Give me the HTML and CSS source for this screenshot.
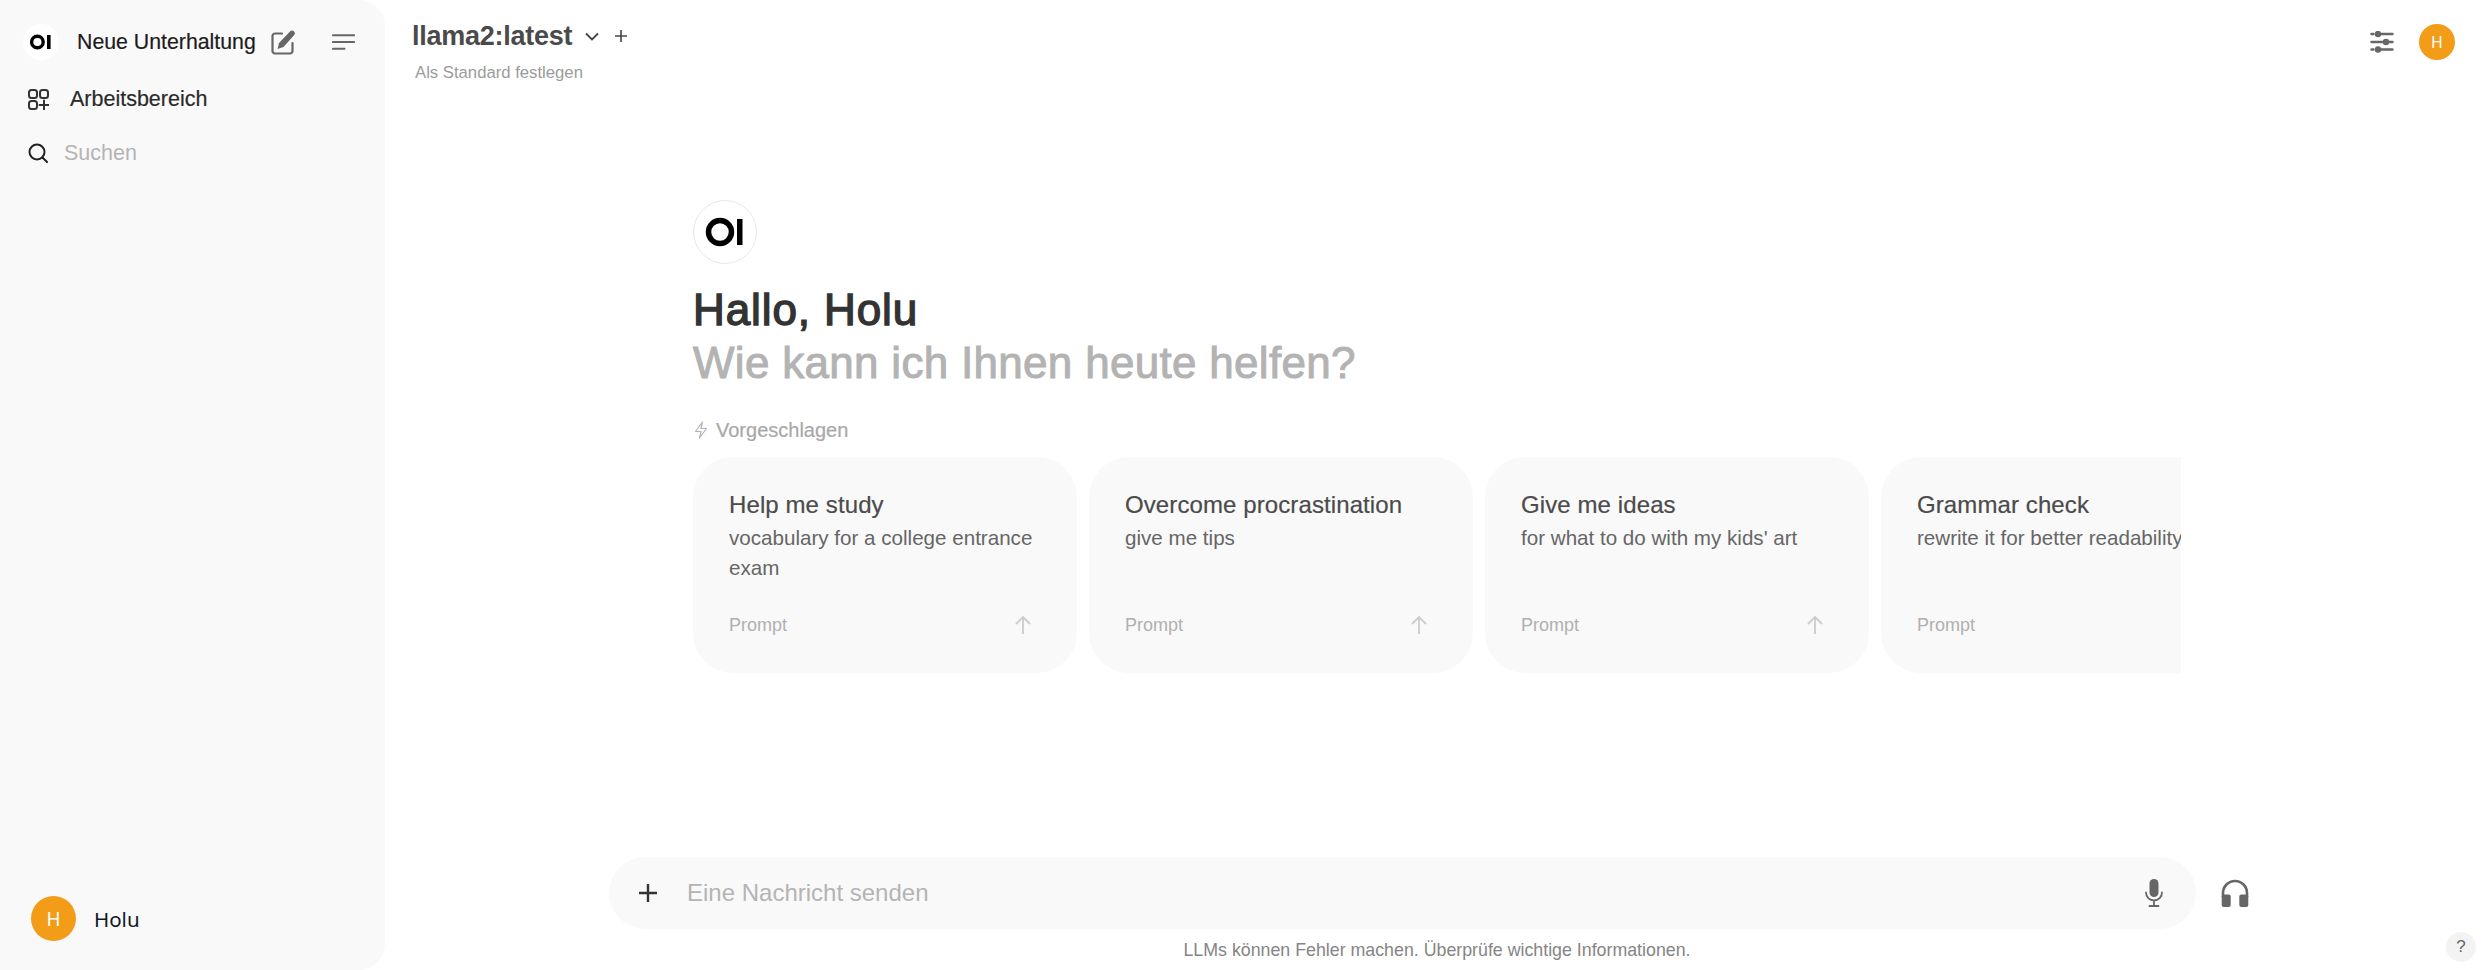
FILE: index.html
```html
<!DOCTYPE html>
<html lang="de">
<head>
<meta charset="utf-8">
<title>Open WebUI</title>
<link rel="stylesheet" href="styles.css">
</head>
<body>
<div class="app">
  <aside class="sidebar">
    <div class="side-top">
      <div class="new-chat">
        <span class="logo-small">
          <svg viewBox="0 0 24 24" width="24" height="24"><circle cx="8.400" cy="12" r="5.800" fill="none" stroke="#000" stroke-width="3.400"/><rect x="18" y="5" width="3.600" height="14" fill="#000"/></svg>
        </span>
        <span class="new-chat-label">Neue Unterhaltung</span>
        <svg class="edit-icon" viewBox="0 0 24 25" width="24" height="25"><path d="M11 3.500H4A2.500 2.500 0 0 0 1.500 6v15A2.500 2.500 0 0 0 4 23.500h15a2.500 2.500 0 0 0 2.500-2.500V13" fill="none" stroke="#666" stroke-width="2.200" stroke-linecap="round"/><path d="M19 1.500a2.700 2.700 0 0 1 4 3.700L12.500 17l-6 2 1.500-6z" fill="#666"/></svg>
        <svg class="menu-icon" viewBox="0 0 24 18" width="23" height="18"><path d="M1 2h22M1 9h22M1 16h12" fill="none" stroke="#666" stroke-width="2.200" stroke-linecap="round"/></svg>
      </div>
      <div class="side-link">
        <svg viewBox="0 0 21 21" width="21" height="21"><g fill="none" stroke="#333" stroke-width="2"><rect x="1" y="1" width="8" height="8" rx="2.500"/><rect x="12" y="1" width="8" height="8" rx="2.500"/><rect x="1" y="12" width="8" height="8" rx="2.500"/><path d="M16 11.500v9M11.500 16h9" stroke-linecap="round"/></g></svg>
        <span>Arbeitsbereich</span>
      </div>
      <div class="side-search">
        <svg viewBox="0 0 20 20" width="20" height="20"><circle cx="9" cy="9" r="7.500" fill="none" stroke="#222" stroke-width="2"/><path d="M14.500 14.500L19 19" stroke="#222" stroke-width="2" stroke-linecap="round"/></svg>
        <span>Suchen</span>
      </div>
    </div>
    <div class="side-user">
      <span class="avatar avatar-large">H</span>
      <span class="user-name">Holu</span>
    </div>
  </aside>

  <main class="main">
    <header class="topbar">
      <div class="model-block">
        <div class="model-row">
          <span class="model-name">llama2:latest</span>
          <svg class="chevron" viewBox="0 0 14 9" width="14" height="9"><path d="M1 1.500l6 6 6-6" fill="none" stroke="#444" stroke-width="1.800"/></svg>
          <svg class="plus-small" viewBox="0 0 14 14" width="14" height="14"><path d="M7 1v12M1 7h12" fill="none" stroke="#444" stroke-width="1.600"/></svg>
        </div>
        <div class="model-default">Als Standard festlegen</div>
      </div>
      <div class="top-actions">
        <svg viewBox="0 0 24 22" width="24" height="22"><g stroke="#666" stroke-width="2.400" stroke-linecap="round"><path d="M1.500 3h2M10 3h12.500M1.500 11h11M19 11h3.500M1.500 18.500h2M10 18.500h12.500"/></g><g fill="#666"><circle cx="8" cy="3" r="3.200"/><circle cx="16" cy="11" r="3.200"/><circle cx="8" cy="18.500" r="3.200"/></g></svg>
        <span class="avatar avatar-top">H</span>
      </div>
    </header>

    <section class="welcome">
      <div class="logo-large">
        <svg viewBox="0 0 40 30" width="40" height="30"><circle cx="15" cy="15" r="11.500" fill="none" stroke="#000" stroke-width="5.500"/><rect x="32" y="2" width="5.500" height="26" fill="#000"/></svg>
      </div>
      <h1 class="hello">Hallo, Holu</h1>
      <p class="help">Wie kann ich Ihnen heute helfen?</p>
      <div class="suggest-label">
        <svg viewBox="0 0 14 18" width="14" height="18"><path d="M8.500 1L1.500 10.500H7L5.500 17l7-9.500H7z" fill="none" stroke="#b4b4b4" stroke-width="1.200" stroke-linejoin="round"/></svg>
        <span>Vorgeschlagen</span>
      </div>
      <div class="cards">
        <article class="card">
          <div class="card-title">Help me study</div>
          <div class="card-desc">vocabulary for a college entrance exam</div>
          <div class="card-foot"><span>Prompt</span><svg viewBox="0 0 18 20" width="18" height="20"><path d="M9 19V2M2 9l7-7 7 7" fill="none" stroke="#ccc" stroke-width="1.800"/></svg></div>
        </article>
        <article class="card">
          <div class="card-title">Overcome procrastination</div>
          <div class="card-desc">give me tips</div>
          <div class="card-foot"><span>Prompt</span><svg viewBox="0 0 18 20" width="18" height="20"><path d="M9 19V2M2 9l7-7 7 7" fill="none" stroke="#ccc" stroke-width="1.800"/></svg></div>
        </article>
        <article class="card">
          <div class="card-title">Give me ideas</div>
          <div class="card-desc">for what to do with my kids' art</div>
          <div class="card-foot"><span>Prompt</span><svg viewBox="0 0 18 20" width="18" height="20"><path d="M9 19V2M2 9l7-7 7 7" fill="none" stroke="#ccc" stroke-width="1.800"/></svg></div>
        </article>
        <article class="card">
          <div class="card-title">Grammar check</div>
          <div class="card-desc nowrap">rewrite it for better readability</div>
          <div class="card-foot"><span>Prompt</span></div>
        </article>
      </div>
    </section>

    <section class="composer">
      <div class="input-row">
        <div class="input-bar">
          <svg class="plus-large" viewBox="0 0 20 20" width="20" height="20"><path d="M10 1v18M1 10h18" fill="none" stroke="#333" stroke-width="2.400"/></svg>
          <span class="placeholder">Eine Nachricht senden</span>
          <svg class="mic" viewBox="0 0 18 28" width="18" height="28"><rect x="4.500" y="0" width="9" height="18" rx="4.500" fill="#666"/><path d="M1 13.500a8 8 0 0 0 16 0M9 21.500V27M4.500 27h9" fill="none" stroke="#666" stroke-width="1.800" stroke-linecap="round"/></svg>
        </div>
        <svg class="headphones" viewBox="0 0 28 28" width="28" height="28"><path d="M2 18v-4a12 12 0 0 1 24 0v4" fill="none" stroke="#666" stroke-width="2.600"/><rect x="0.700" y="15.500" width="9" height="12.500" rx="2" fill="#666"/><rect x="18.300" y="15.500" width="9" height="12.500" rx="2" fill="#666"/></svg>
      </div>
      <div class="disclaimer">LLMs können Fehler machen. Überprüfe wichtige Informationen.</div>
    </section>
    <button class="help-btn" type="button">?</button>
  </main>
</div>
</body>
</html>
```
FILE: styles.css
```css
* { box-sizing: border-box; }
html, body { margin: 0; height: 100%; background: #fff; }
body { font-family: "Liberation Sans", Arial, sans-serif; overflow: hidden; }

.app { display: flex; height: 970px; }

.sidebar {
  width: 385px;
  flex: none;
  background: #f9f9f9;
  border-radius: 0 26px 26px 0;
  display: flex;
  flex-direction: column;
  justify-content: space-between;
  padding: 24px 0 29px;
}
.new-chat { display: flex; align-items: center; height: 36px; padding-left: 23px; }
.logo-small {
  width: 36px; height: 36px; border-radius: 50%; background: #fff;
  display: flex; align-items: center; justify-content: center;
}
.new-chat-label { margin-left: 18px; font-size: 21.300px; color: #1c1c1c; white-space: nowrap; -webkit-text-stroke: 0.2px #1c1c1c; }
.edit-icon { margin-left: 15px; flex: none; }
.menu-icon { margin-left: 37px; flex: none; }

.side-link { display: flex; align-items: center; gap: 21px; padding-left: 28px; margin-top: 24px; height: 30px; font-size: 21.500px; color: #2a2a2a; -webkit-text-stroke: 0.2px #2a2a2a; }
.side-search { display: flex; align-items: center; gap: 16px; padding-left: 28px; margin-top: 24px; height: 30px; font-size: 21.500px; color: #b4b4b4; }

.side-user { display: flex; align-items: center; gap: 18px; padding-left: 31px; }
.avatar { display: flex; align-items: center; justify-content: center; border-radius: 50%; background: #f39c17; color: #fff; font-family: "Noto Sans", sans-serif; }
.avatar-large { width: 45px; height: 45px; font-size: 19px; }
.avatar-top { width: 36px; height: 36px; font-size: 16px; }
.user-name { font-family: "Noto Sans", sans-serif; font-size: 20.500px; color: #0f172a; }

.main { position: relative; flex: 1; min-width: 0; display: flex; flex-direction: column; }

.topbar { display: flex; justify-content: space-between; padding: 18px 31px 0 27px; height: 200px; flex: none; }
.model-row { display: flex; align-items: center; height: 36px; }
.model-name { font-size: 27px; font-weight: 700; color: #4a4a4a; letter-spacing: -0.25px; }
.chevron { margin-left: 13px; }
.plus-small { margin-left: 15px; }
.model-default { margin: 9px 0 0 3px; font-size: 16.700px; color: #9b9b9b; }
.top-actions { display: flex; align-items: center; gap: 25px; height: 36px; margin-top: 6px; }

.welcome { width: 1488px; margin-left: 308px; flex: none; }
.logo-large {
  width: 64px; height: 64px; border-radius: 50%; border: 1px solid #e8e8e8;
  display: flex; align-items: center; justify-content: center;
}
.hello { margin: 20px 0 0; font-size: 44px; line-height: 52px; font-weight: 400; letter-spacing: 0.9px; color: #333; -webkit-text-stroke: 1.400px #333; }
.help { margin: 1px 0 0; font-size: 44px; line-height: 52px; font-weight: 400; letter-spacing: 0.3px; color: #b3b3b3; -webkit-text-stroke: 1px #b3b3b3; }
.suggest-label { display: flex; align-items: center; gap: 8px; margin-top: 28px; height: 26px; font-size: 20px; color: #a8a8a8; padding-left: 1px; -webkit-text-stroke: 0.2px #a8a8a8; }

.cards { display: flex; gap: 12px; margin-top: 14px; overflow: hidden; }
.card {
  width: 384px; height: 216px; flex: none; background: #f9f9f9; border-radius: 40px;
  padding: 33px 36px 0; display: flex; flex-direction: column;
}
.card-title { font-size: 24px; line-height: 30px; letter-spacing: 0.1px; color: #4b4b4b; -webkit-text-stroke: 0.2px #4b4b4b; }
.card-desc { margin-top: 3px; font-size: 20.600px; line-height: 30px; color: #666; height: 60px; }
.nowrap { white-space: nowrap; }
.card-foot { display: flex; align-items: center; justify-content: space-between; margin-top: 30px; height: 24px; font-size: 18px; color: #b0b0b0; padding-right: 9px; }

.composer { margin-top: auto; flex: none; }
.input-row { display: flex; align-items: center; padding-left: 224px; }
.input-bar {
  width: 1587px; height: 72px; flex: none; background: #f9f9f9; border-radius: 36px;
  display: flex; align-items: center; padding: 0 33px 0 29px;
}
.placeholder { margin-left: 29px; font-size: 24px; color: #b4b4b4; flex: 1; }
.headphones { margin-left: 25px; flex: none; }
.disclaimer { text-align: center; font-size: 17.800px; line-height: 24px; color: #858585; margin-top: 9px; padding: 0 0 8px 3px; }

.help-btn {
  position: absolute; right: 10px; bottom: 8px; width: 30px; height: 30px; border: 0;
  border-radius: 50%; background: #f3f3f3; color: #666; font-family: "Liberation Sans", sans-serif; font-size: 17px; padding: 0;
}
```
